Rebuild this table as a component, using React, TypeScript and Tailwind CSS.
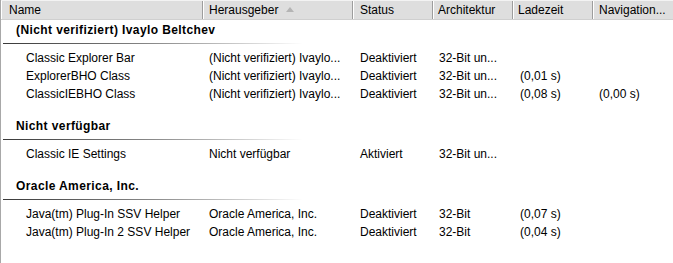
import React from "react";

const font = { fontFamily: '"Liberation Sans", Arial, sans-serif' };

type Item = { name: string; pub: string; status: string; arch: string; load?: string; nav?: string };
type Group = { title: string; items: Item[] };

const groups: Group[] = [
  {
    title: "(Nicht verifiziert) Ivaylo Beltchev",
    items: [
      { name: "Classic Explorer Bar", pub: "(Nicht verifiziert) Ivaylo...", status: "Deaktiviert", arch: "32-Bit un..." },
      { name: "ExplorerBHO Class", pub: "(Nicht verifiziert) Ivaylo...", status: "Deaktiviert", arch: "32-Bit un...", load: "(0,01 s)" },
      { name: "ClassicIEBHO Class", pub: "(Nicht verifiziert) Ivaylo...", status: "Deaktiviert", arch: "32-Bit un...", load: "(0,08 s)", nav: "(0,00 s)" },
    ],
  },
  {
    title: "Nicht verfügbar",
    items: [{ name: "Classic IE Settings", pub: "Nicht verfügbar", status: "Aktiviert", arch: "32-Bit un..." }],
  },
  {
    title: "Oracle America, Inc.",
    items: [
      { name: "Java(tm) Plug-In SSV Helper", pub: "Oracle America, Inc.", status: "Deaktiviert", arch: "32-Bit", load: "(0,07 s)" },
      { name: "Java(tm) Plug-In 2 SSV Helper", pub: "Oracle America, Inc.", status: "Deaktiviert", arch: "32-Bit", load: "(0,04 s)" },
    ],
  },
];

const grid = "grid grid-cols-[202px_150px_80px_80px_80px_80px]";
const hcell =
  "h-full flex items-center whitespace-nowrap overflow-hidden border-r border-r-[#9d9d9d] shadow-[inset_1px_0_0_#ffffff]";
const cell = "whitespace-nowrap overflow-hidden leading-[18px]";

export default function App() {
  return (
    <div className="w-[673px] h-[263px] bg-white border-l border-l-[#a8a8a8] text-[12px] text-black overflow-hidden" style={font}>
      <div className={`${grid} h-[20px] bg-[#dedede] border-t border-t-[#f3f3f3] border-b border-b-[#cfcfcf]`}>
        <div className={`${hcell} pl-[8px]`}>Name</div>
        <div className={`${hcell} pl-[6px]`}>
          <span>Herausgeber</span>
          <svg width="8" height="5" viewBox="0 0 8 5" className="ml-[8px] mb-[2px]">
            <path d="M0 5 L4 0 L8 5 Z" fill="#b4b4b4" />
          </svg>
        </div>
        <div className={`${hcell} pl-[7px]`}>Status</div>
        <div className={`${hcell} pl-[5px]`}>Architektur</div>
        <div className={`${hcell} pl-[5px]`}>Ladezeit</div>
        <div className={`${hcell} pl-[6px] border-r-0`}>Navigation...</div>
      </div>
      {groups.map((g) => (
        <div key={g.title} className="pb-[13px]">
          <div className="h-[24px] pt-[2px] flex flex-col">
            <div className="pl-[15px] font-bold leading-[16px] tracking-[0.4px] whitespace-nowrap">{g.title}</div>
            <div className="mt-auto ml-[2px] h-[1px] w-[300px] bg-gradient-to-r from-[#3a3a3a] via-[#8a8a8a] to-[#ffffff]" />
          </div>
          <div className="pt-[5px]">
            {g.items.map((it) => (
              <div key={it.name} className={`${grid} h-[18px]`}>
                <div className={`${cell} pl-[25px]`}>{it.name}</div>
                <div className={`${cell} pl-[6px]`}>{it.pub}</div>
                <div className={`${cell} pl-[7px]`}>{it.status}</div>
                <div className={`${cell} pl-[6px]`}>{it.arch}</div>
                <div className={`${cell} pl-[7px]`}>{it.load ?? ""}</div>
                <div className={`${cell} pl-[6px]`}>{it.nav ?? ""}</div>
              </div>
            ))}
          </div>
        </div>
      ))}
    </div>
  );
}
